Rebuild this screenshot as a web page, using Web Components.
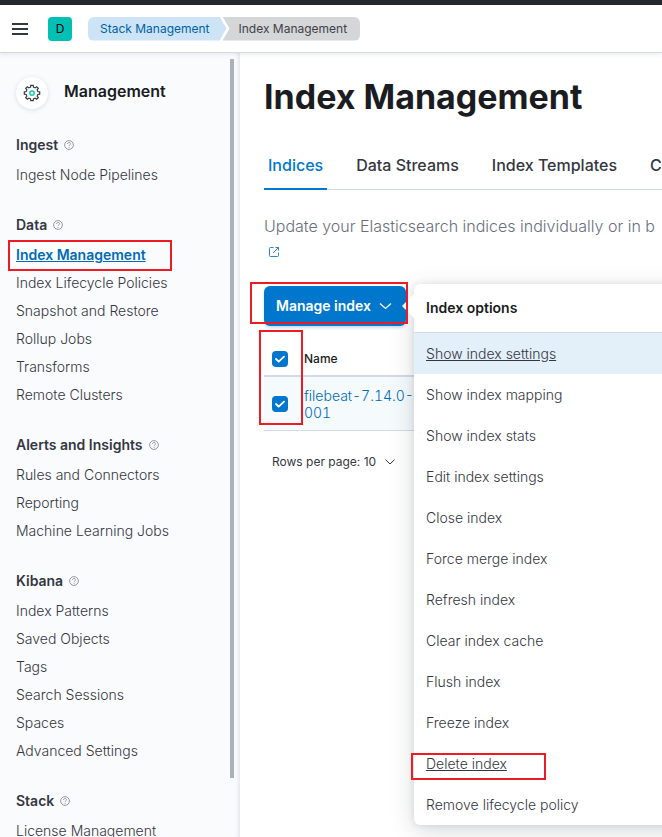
<!DOCTYPE html>
<html lang="en">
<head>
<meta charset="utf-8">
<meta name="viewport" content="width=device-width, initial-scale=1">
<title>Index Management</title>
<style>
html, body { height: 100%; margin: 0; }
body { font: 14px/20px Inter, "Liberation Sans", sans-serif; color: #343741; background: #fff; overflow: hidden; }
</style>
</head>
<body>
<km-app></km-app>
<script>
const define = (name, html, setup) => customElements.define(name, class extends HTMLElement {
  constructor() {
    super();
    const t = document.createElement('template');
    t.innerHTML = html;
    this.attachShadow({ mode: 'open' }).append(t.content.cloneNode(true));
  }
  connectedCallback() { if (setup) setup.call(this, this.shadowRoot); }
});

/* Red frame laid over the area that a step refers to */
define('km-mark', `<style>
:host { position: absolute; inset: var(--mark-inset, 0); border: 2px solid #ed1c24; pointer-events: none; z-index: 5; box-sizing: border-box; }
</style>`);

define('km-header', `<style>
:host { display: block; position: relative; z-index: 3; background: #fff; border-top: 5px solid #25282f; border-bottom: 1px solid #d3dae6; box-shadow: 0 2px 4px rgba(100,110,130,.12); }
header { display: flex; align-items: center; height: 47px; padding: 0 12px; }
button { display: grid; place-items: center; width: 16px; height: 24px; padding: 0; border: 0; background: none; }
.space { display: grid; place-items: center; width: 24px; height: 24px; margin: 0 16px 0 20px; border-radius: 4px; background: #00bfb3; color: #000; font: inherit; font-size: 12px; text-decoration: none; }
nav { display: flex; font-size: 12px; line-height: 24px; }
.crumb { color: #0061a6; background: #cce4f5; padding: 0 17px 0 12px; border-radius: 6px 0 0 6px; clip-path: polygon(0 0, calc(100% - 7px) 0, 100% 50%, calc(100% - 7px) 100%, 0 100%); text-decoration: none; }
.last { color: #404248; background: #d5d6d7; padding: 0 13px 0 16px; margin-left: -4px; border-radius: 0 6px 6px 0; clip-path: polygon(0 0, 100% 0, 100% 100%, 0 100%, 7px 50%); }
</style>
<header>
  <button aria-label="Toggle navigation"><svg width="16" height="12" viewBox="0 0 16 12" fill="#343741"><path d="M0 0h16v2H0zM0 5h16v2H0zM0 10h16v2H0z"/></svg></button>
  <a class="space" href="#">D</a>
  <nav aria-label="Breadcrumb"><a class="crumb" href="#">Stack Management</a><span class="last">Index Management</span></nav>
</header>`);

define('km-help', `<style>:host { display: block; width: 10px; height: 10px; } svg { display: block; }</style>
<svg width="10" height="10" viewBox="0 0 10 10" fill="none" stroke="#7b808a" stroke-width=".8"><circle cx="5" cy="5" r="4.4"/><path d="M3.5 4c0-2 3-2 3-.2C6.500 5 5 4.800 5 6.100M5 7v.9"/></svg>`);

define('km-group', `<style>
:host { display: block; margin-bottom: 20px; }
h3 { display: flex; align-items: center; gap: 6px; height: 32px; margin: 0; font-size: 14px; font-weight: 600; line-height: 20px; color: #343741; }
</style><h3><span></span><km-help></km-help></h3><slot></slot>`,
function (r) { r.querySelector('span').textContent = this.getAttribute('heading'); });

define('km-link', `<style>
:host { display: flex; align-items: center; height: 28px; position: relative; --mark-inset: -1px 43px -2px -8px; }
a { color: #343741; font-weight: 300; text-decoration: none; white-space: nowrap; }
:host([current]) a { color: #006bb8; font-weight: 600; text-decoration: underline; }
</style><a href="#"><slot></slot></a><slot name="mark"></slot>`);

define('km-sidebar', `<style>
:host { display: block; position: relative; width: 240px; flex: none; box-sizing: border-box; padding: 24px 25px 0 16px; background: #fafbfd; box-shadow: inset -5px 0 4px -4px rgba(90,100,120,.18); overflow: hidden; }
.title { display: flex; gap: 16px; align-items: center; margin-bottom: 20px; }
.round { display: grid; place-items: center; width: 32px; height: 32px; border-radius: 50%; background: #fff; box-shadow: 0 1px 5px rgba(100,110,130,.2); }
h2 { margin: 0; padding-bottom: 4px; font-size: 16px; line-height: 20px; font-weight: 600; color: #1a1c21; }
.thumb { position: absolute; right: 6px; top: 6px; width: 4px; height: calc(100% - 65px); background: #abb0b9; }
</style>
<div class="title"><span class="round"><svg width="18" height="18" viewBox="0 0 18 18" fill="none"><path id="gear" stroke="#343741" stroke-width="1.2"/><circle cx="9" cy="9" r="2.2" stroke="#00bfb3" stroke-width="1.3"/></svg></span><h2>Management</h2></div>
<slot></slot><div class="thumb"></div>`,
function (r) {
  const pts = [];
  for (let i = 0; i < 8; i++) for (const [da, rad] of [[-14, 6], [-9, 7.8], [9, 7.8], [14, 6]]) {
    const a = (i * 45 + da) * Math.PI / 180;
    pts.push((9 + rad * Math.sin(a)).toFixed(2) + ' ' + (9 - rad * Math.cos(a)).toFixed(2));
  }
  r.querySelector('#gear').setAttribute('d', 'M' + pts.join('L') + 'Z');
});

define('km-tabs', `<style>
:host { display: flex; gap: 25px; box-sizing: border-box; border-bottom: 1px solid #d3dae6; }
button { flex: none; font: 500 16px/24px Inter, sans-serif; color: #343741; padding: 12px 4px 11px; margin-bottom: -1px; border: 0; border-bottom: 2px solid transparent; background: none; white-space: nowrap; }
button[aria-selected=true] { color: #0077cc; border-color: #0077cc; }
</style>
<button role="tab" aria-selected="true">Indices</button><button role="tab" aria-selected="false">Data Streams</button><button role="tab" aria-selected="false">Index Templates</button><button role="tab" aria-selected="false">Component Templates</button>`);

define('km-menu', `<style>
:host { position: absolute; z-index: 4; left: calc(100% + 8px); top: -2px; width: 288px; background: #fff; border-radius: 6px; box-shadow: 0 6px 24px rgba(60,65,75,.2), 0 0 6px rgba(60,65,75,.12); }
:host::before { content: ""; position: absolute; left: -12px; top: 10px; border: 12px solid transparent; border-left: 0; border-right-color: #fff; }
h4 { margin: 0; padding: 14px 12px; font-size: 14px; line-height: 20px; font-weight: 600; color: #1a1c21; border-bottom: 1px solid #d3dae6; }
</style><h4>Index options</h4><slot></slot>`);

define('km-option', `<style>
:host { display: block; position: relative; --mark-inset: 10px 156px 4px -3px; }
button { display: block; width: 100%; height: 41px; padding: 0 12px; border: 0; background: none; text-align: left; font: 300 14px/20px Inter, sans-serif; color: #343741; }
:host([active]) button { background: #e3eff9; text-decoration: underline; }
:host([underlined]) button { text-decoration: underline; }
</style><button><slot></slot></button><slot name="mark"></slot>`);

define('km-manage', `<style>
:host { display: inline-block; position: relative; --mark-inset: -4px -2px 2px -14px; }
.main { display: flex; align-items: center; gap: 8px; height: 40px; padding: 0 14px 0 12px; border: 0; border-radius: 6px; background: #0077cc; color: #fff; font: 600 14px/20px Inter, sans-serif; box-shadow: 0 2px 3px rgba(0,80,150,.2); }
</style>
<button class="main">Manage index<svg width="13" height="8" viewBox="0 0 13 8" fill="none" stroke="#fff" stroke-width="1.200"><path d="M1 1.500 6.500 6.500 12 1.500"/></svg></button>
<km-menu>
  <km-option active>Show index settings</km-option>
  <km-option>Show index mapping</km-option>
  <km-option>Show index stats</km-option>
  <km-option>Edit index settings</km-option>
  <km-option>Close index</km-option>
  <km-option>Force merge index</km-option>
  <km-option>Refresh index</km-option>
  <km-option>Clear index cache</km-option>
  <km-option>Flush index</km-option>
  <km-option>Freeze index</km-option>
  <km-option underlined>Delete index<km-mark slot="mark"></km-mark></km-option>
  <km-option>Remove lifecycle policy</km-option>
</km-menu>
<km-mark></km-mark>`);

define('km-check', `<style>
:host { display: block; position: relative; width: 16px; height: 16px; }
input { appearance: none; display: block; width: 16px; height: 16px; margin: 0; border-radius: 4px; background: #0077cc; }
svg { position: absolute; inset: 0; pointer-events: none; }
</style><input type="checkbox" checked><svg width="16" height="16" fill="none" stroke="#fff" stroke-width="1.800" stroke-linecap="round" stroke-linejoin="round"><path d="m4 8 2.700 2.700L12 5.700"/></svg>`,
function (r) { r.querySelector('input').setAttribute('aria-label', this.getAttribute('label')); });

define('km-table', `<style>
:host { display: block; position: relative; }
table { width: 100%; border-collapse: separate; border-spacing: 0; }
th, td { padding: 0; text-align: left; vertical-align: middle; }
.c { width: 40px; }
km-check { margin-left: 8px; }
th { height: 33px; font-size: 12px; line-height: 16px; font-weight: 500; color: #1a1c21; border-bottom: 2px solid #d3dae6; }
td { height: 53px; background: #f5fafd; border-bottom: 1px solid #d3dae6; line-height: 17px; font-variant-numeric: tabular-nums; }
a { color: #006bb8; font-weight: 300; text-decoration: none; white-space: nowrap; }
.frame { position: absolute; left: -5px; top: -12px; width: 44px; bottom: 6px; }
</style>
<table><thead><tr><th class="c"><km-check label="Select all rows"></km-check></th><th>Name</th></tr></thead>
<tbody><tr><td class="c"><km-check label="Select this row"></km-check></td><td><a href="#">filebeat-7.14.0-2<br>001</a></td></tr></tbody></table>
<div class="frame"><km-mark></km-mark></div>`);

define('km-main', `<style>
:host { display: block; flex: 1; min-width: 0; padding: 20px 0 0 24px; background: #fff; overflow: hidden; }
h1 { margin: 0 0 20px; font-size: 34px; line-height: 48px; font-weight: 700; color: #1a1c21; white-space: nowrap; }
p { margin: 24px 0 0; font-size: 16px; line-height: 25px; color: #69707d; font-weight: 300; white-space: nowrap; }
.ext { display: block; width: 10px; height: 10px; padding: 8px 5px; }
.ext svg { display: block; }
.bar { display: flex; margin: 21px 0 16px; }
.rows { display: flex; align-items: center; gap: 9px; margin: 21px 8px; padding: 0; border: 0; background: none; font: 400 12px/20px Inter, sans-serif; color: #343741; }
</style>
<h1>Index Management</h1>
<km-tabs role="tablist"></km-tabs>
<p>Update your Elasticsearch indices individually or in b</p>
<a class="ext" href="#" aria-label="Learn more"><svg width="10" height="10" viewBox="0 0 10 10" fill="none" stroke="#2b87cc"><path d="M4.500.5h-3a1 1 0 0 0-1 1v7a1 1 0 0 0 1 1h7a1 1 0 0 0 1-1v-3M6.500.5h3v3M9.500.5 4 6"/></svg></a>
<div class="bar"><km-manage></km-manage></div>
<km-table></km-table>
<button class="rows">Rows per page: 10<svg width="10" height="6" viewBox="0 0 10 6" fill="none" stroke="#343741"><path d="m.5.7 4.500 4.300L9.500.7"/></svg></button>`);

define('km-app', `<style>
:host { display: flex; flex-direction: column; height: 100vh; overflow: hidden; }
.body { display: flex; flex: 1; min-height: 0; }
</style>
<km-header></km-header>
<div class="body">
<km-sidebar>
  <km-group heading="Ingest"><km-link>Ingest Node Pipelines</km-link></km-group>
  <km-group heading="Data">
    <km-link current>Index Management<km-mark slot="mark"></km-mark></km-link>
    <km-link>Index Lifecycle Policies</km-link>
    <km-link>Snapshot and Restore</km-link>
    <km-link>Rollup Jobs</km-link>
    <km-link>Transforms</km-link>
    <km-link>Remote Clusters</km-link>
  </km-group>
  <km-group heading="Alerts and Insights">
    <km-link>Rules and Connectors</km-link>
    <km-link>Reporting</km-link>
    <km-link>Machine Learning Jobs</km-link>
  </km-group>
  <km-group heading="Kibana">
    <km-link>Index Patterns</km-link>
    <km-link>Saved Objects</km-link>
    <km-link>Tags</km-link>
    <km-link>Search Sessions</km-link>
    <km-link>Spaces</km-link>
    <km-link>Advanced Settings</km-link>
  </km-group>
  <km-group heading="Stack"><km-link>License Management</km-link></km-group>
</km-sidebar>
<km-main></km-main>
</div>`);
</script>
</body>
</html>
